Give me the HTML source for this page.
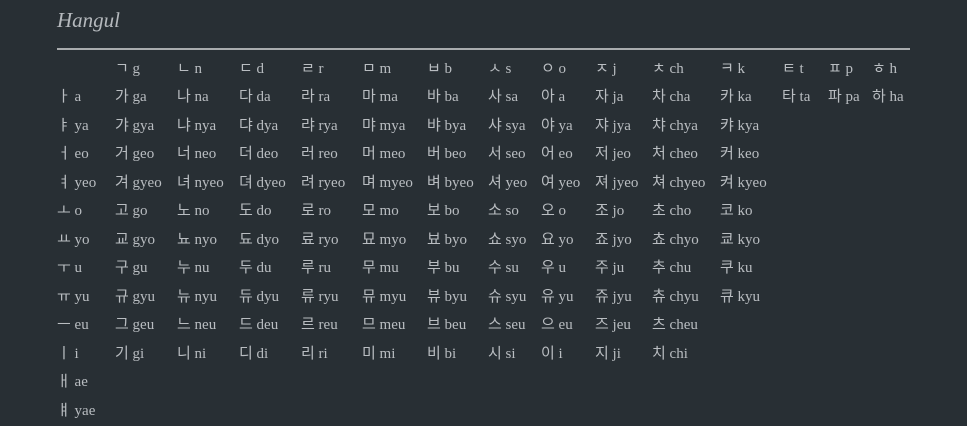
<!DOCTYPE html>
<html><head><meta charset="utf-8">
<style>
html,body{margin:0;padding:0;background:#282f34;width:967px;height:426px;overflow:hidden}
body{font-family:"Liberation Serif","Noto Sans CJK KR",serif;color:#b9bdc1}
h1{position:absolute;left:57px;top:8px;margin:0;font-size:21px;font-style:italic;font-weight:normal;color:#b5b9bd}
.rule{position:absolute;left:57px;top:48px;width:853px;height:2px;background:#a9acae}
table{position:absolute;left:57px;top:53px;border-collapse:collapse;table-layout:fixed;font-size:15px}
td{padding:0;height:28.5px;white-space:nowrap;vertical-align:middle}
</style></head><body>
<h1>Hangul</h1>
<div class="rule"></div>
<table>
<colgroup><col style="width:58px"><col style="width:62px"><col style="width:62px"><col style="width:62px"><col style="width:61px"><col style="width:65px"><col style="width:61px"><col style="width:53px"><col style="width:54px"><col style="width:57px"><col style="width:68px"><col style="width:62px"><col style="width:46px"><col style="width:44px"><col style="width:40px"></colgroup>
<tr><td></td><td>ㄱ g</td><td>ㄴ n</td><td>ㄷ d</td><td>ㄹ r</td><td>ㅁ m</td><td>ㅂ b</td><td>ㅅ s</td><td>ㅇ o</td><td>ㅈ j</td><td>ㅊ ch</td><td>ㅋ k</td><td>ㅌ t</td><td>ㅍ p</td><td>ㅎ h</td></tr>
<tr><td>ㅏ a</td><td>가 ga</td><td>나 na</td><td>다 da</td><td>라 ra</td><td>마 ma</td><td>바 ba</td><td>사 sa</td><td>아 a</td><td>자 ja</td><td>차 cha</td><td>카 ka</td><td>타 ta</td><td>파 pa</td><td>하 ha</td></tr>
<tr><td>ㅑ ya</td><td>갸 gya</td><td>냐 nya</td><td>댜 dya</td><td>랴 rya</td><td>먀 mya</td><td>뱌 bya</td><td>샤 sya</td><td>야 ya</td><td>쟈 jya</td><td>챠 chya</td><td>캬 kya</td><td></td><td></td><td></td></tr>
<tr><td>ㅓ eo</td><td>거 geo</td><td>너 neo</td><td>더 deo</td><td>러 reo</td><td>머 meo</td><td>버 beo</td><td>서 seo</td><td>어 eo</td><td>저 jeo</td><td>처 cheo</td><td>커 keo</td><td></td><td></td><td></td></tr>
<tr><td>ㅕ yeo</td><td>겨 gyeo</td><td>녀 nyeo</td><td>뎌 dyeo</td><td>려 ryeo</td><td>며 myeo</td><td>벼 byeo</td><td>셔 yeo</td><td>여 yeo</td><td>져 jyeo</td><td>쳐 chyeo</td><td>켜 kyeo</td><td></td><td></td><td></td></tr>
<tr><td>ㅗ o</td><td>고 go</td><td>노 no</td><td>도 do</td><td>로 ro</td><td>모 mo</td><td>보 bo</td><td>소 so</td><td>오 o</td><td>조 jo</td><td>초 cho</td><td>코 ko</td><td></td><td></td><td></td></tr>
<tr><td>ㅛ yo</td><td>교 gyo</td><td>뇨 nyo</td><td>됴 dyo</td><td>료 ryo</td><td>묘 myo</td><td>뵤 byo</td><td>쇼 syo</td><td>요 yo</td><td>죠 jyo</td><td>쵸 chyo</td><td>쿄 kyo</td><td></td><td></td><td></td></tr>
<tr><td>ㅜ u</td><td>구 gu</td><td>누 nu</td><td>두 du</td><td>루 ru</td><td>무 mu</td><td>부 bu</td><td>수 su</td><td>우 u</td><td>주 ju</td><td>추 chu</td><td>쿠 ku</td><td></td><td></td><td></td></tr>
<tr><td>ㅠ yu</td><td>규 gyu</td><td>뉴 nyu</td><td>듀 dyu</td><td>류 ryu</td><td>뮤 myu</td><td>뷰 byu</td><td>슈 syu</td><td>유 yu</td><td>쥬 jyu</td><td>츄 chyu</td><td>큐 kyu</td><td></td><td></td><td></td></tr>
<tr><td>ㅡ eu</td><td>그 geu</td><td>느 neu</td><td>드 deu</td><td>르 reu</td><td>므 meu</td><td>브 beu</td><td>스 seu</td><td>으 eu</td><td>즈 jeu</td><td>츠 cheu</td><td></td><td></td><td></td><td></td></tr>
<tr><td>ㅣ i</td><td>기 gi</td><td>니 ni</td><td>디 di</td><td>리 ri</td><td>미 mi</td><td>비 bi</td><td>시 si</td><td>이 i</td><td>지 ji</td><td>치 chi</td><td></td><td></td><td></td><td></td></tr>
<tr><td>ㅐ ae</td><td></td><td></td><td></td><td></td><td></td><td></td><td></td><td></td><td></td><td></td><td></td><td></td><td></td><td></td></tr>
<tr><td>ㅒ yae</td><td></td><td></td><td></td><td></td><td></td><td></td><td></td><td></td><td></td><td></td><td></td><td></td><td></td><td></td></tr>
</table>
</body></html>
